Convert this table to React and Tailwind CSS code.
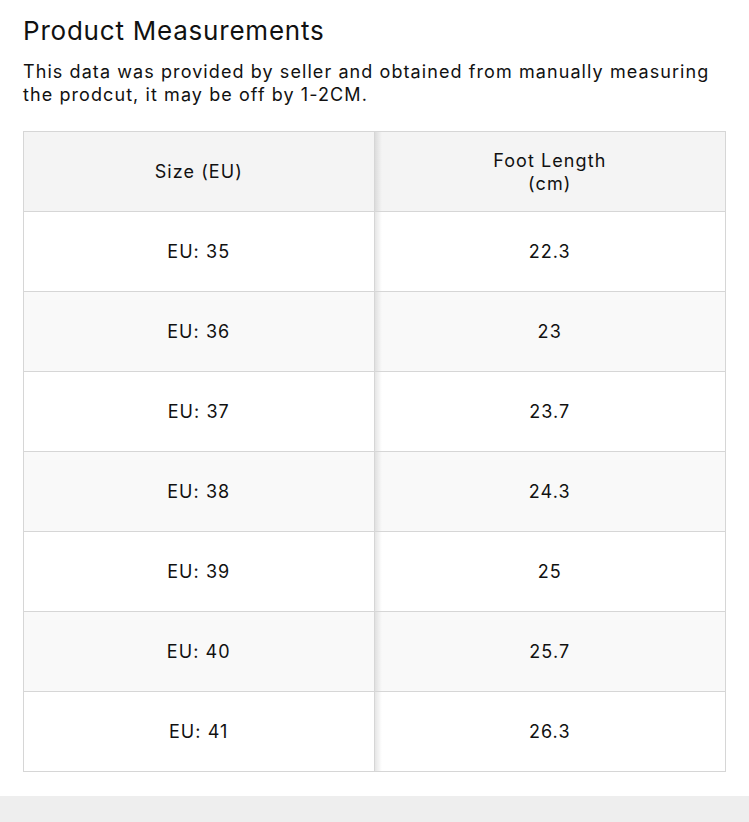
import React from 'react';

const rows = [
  { size: 'EU: 35', foot: '22.3' },
  { size: 'EU: 36', foot: '23' },
  { size: 'EU: 37', foot: '23.7' },
  { size: 'EU: 38', foot: '24.3' },
  { size: 'EU: 39', foot: '25' },
  { size: 'EU: 40', foot: '25.7' },
  { size: 'EU: 41', foot: '26.3' },
];

// one table row: left cell has the divider, right cell gets a soft shadow from it
const Row = ({ left, right, bg }) => (
  <div className={`grid grid-cols-2 h-[80px] border-b border-[#d6d6d6] ${bg}`}>
    <div className="flex items-center justify-center text-center border-r border-[#d6d6d6]">
      {left}
    </div>
    <div className="relative flex items-center justify-center text-center">
      <div className="absolute left-0 top-0 bottom-0 w-[7px] bg-gradient-to-r from-black/10 to-transparent" />
      {right}
    </div>
  </div>
);

export default function App() {
  return (
    <div
      className="w-[749px] h-[822px] bg-white flex flex-col text-[#111]"
      style={{ fontFamily: 'Inter, "Open Sans", sans-serif' }}
    >
      <div className="px-[23px] pt-[14px] pb-[24px]">
        <h1 className="text-[26px] leading-[34px] font-normal tracking-[0.03em]">Product Measurements</h1>
        <p className="mt-[12px] text-[18px] leading-[23px] tracking-[0.06em]">
          This data was provided by seller and obtained from manually measuring the prodcut, it may be off by 1-2CM.
        </p>

        <div className="mt-[25px] border-x border-t border-[#d6d6d6] text-[18px] tracking-[0.06em]">
          <Row
            bg="bg-[#f4f4f4]"
            left="Size (EU)"
            right={
              <span className="leading-[23px]">
                Foot Length
                <br />
                (cm)
              </span>
            }
          />
          {rows.map((r, i) => (
            <Row
              key={r.size}
              bg={i % 2 === 1 ? 'bg-[#f9f9f9]' : 'bg-white'}
              left={r.size}
              right={r.foot}
            />
          ))}
        </div>
      </div>
      <div className="flex-1 bg-[#eeeeee]" />
    </div>
  );
}
